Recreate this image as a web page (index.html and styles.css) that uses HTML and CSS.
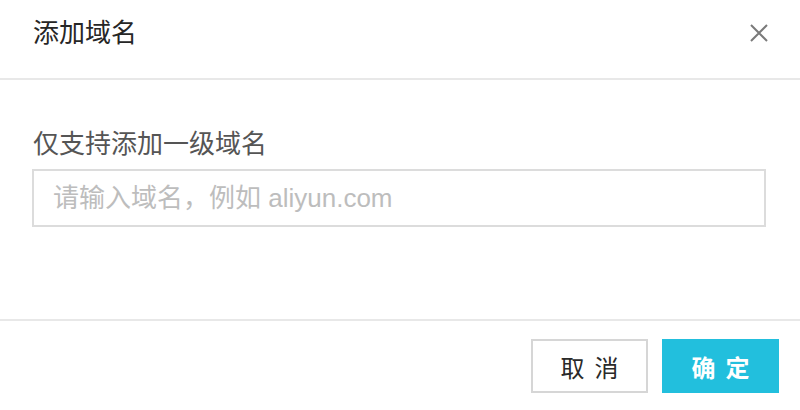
FILE: index.html
```html
<!DOCTYPE html>
<html lang="zh-CN">
<head>
<meta charset="utf-8">
<title>添加域名</title>
<link rel="stylesheet" href="styles.css">
</head>
<body>
<div class="dialog">
  <div class="dialog-header">
    <h2 class="dialog-title">添加域名</h2>
    <button class="dialog-close" type="button" aria-label="关闭">
      <svg width="18" height="18" viewBox="0 0 18 18">
        <path d="M1 1 L17 17 M17 1 L1 17" stroke="#7a7a7a" stroke-width="2" fill="none"/>
      </svg>
    </button>
  </div>
  <div class="dialog-body">
    <label class="field-label" for="domain">仅支持添加一级域名</label>
    <input class="field-input" id="domain" type="text" placeholder="请输入域名，例如 aliyun.com">
  </div>
  <div class="dialog-footer">
    <button class="btn btn-default" type="button">取消</button>
    <button class="btn btn-primary" type="button">确定</button>
  </div>
</div>
</body>
</html>
```
FILE: styles.css
```css
html, body {
  margin: 0;
  padding: 0;
  background: #fff;
}

body {
  font-family: "Liberation Sans", "Noto Sans CJK SC", sans-serif;
}

.dialog {
  width: 800px;
  height: 410px;
  display: flex;
  flex-direction: column;
  box-sizing: border-box;
}

.dialog-header {
  height: 80px;
  box-sizing: border-box;
  padding: 20px 32px 0 33px;
  display: flex;
  justify-content: space-between;
  align-items: flex-start;
  border-bottom: 2px solid #e8e8e8;
}

.dialog-title {
  margin: 0;
  font-size: 26px;
  line-height: 26px;
  font-weight: 400;
  color: #262626;
}

.dialog-close {
  margin: 4px 0 0 0;
  padding: 0;
  border: 0;
  background: none;
  width: 18px;
  height: 18px;
  display: flex;
  cursor: pointer;
}

.dialog-body {
  height: 239px;
  box-sizing: border-box;
  padding: 51px 34px 0 32px;
  display: flex;
  flex-direction: column;
}

.field-label {
  font-size: 26px;
  line-height: 26px;
  color: #555;
  padding-left: 1px;
}

.field-input {
  margin-top: 12px;
  height: 58px;
  box-sizing: border-box;
  border: 2px solid #dcdcdc;
  padding: 0 19px;
  font-family: "Liberation Sans", "Noto Sans CJK SC", sans-serif;
  font-size: 26px;
  color: #333;
  outline: none;
}

.field-input::placeholder {
  color: #bdbdbd;
}

.dialog-footer {
  flex: 1;
  border-top: 2px solid #e8e8e8;
  padding: 18px 21px 0 0;
  display: flex;
  justify-content: flex-end;
  align-items: flex-start;
  gap: 14px;
}

.btn {
  width: 117px;
  height: 54px;
  box-sizing: border-box;
  font-family: "Noto Sans CJK SC", sans-serif;
  font-size: 24px;
  letter-spacing: 10px;
  text-indent: 10px;
  padding: 0;
  border-radius: 0;
  cursor: pointer;
}

.btn-default {
  background: #fff;
  border: 2px solid #d6d6d6;
  color: #2a2a2a;
}

.btn-primary {
  background: #22bfdd;
  border: 2px solid #22bfdd;
  color: #fff;
  font-weight: 700;
}
```
